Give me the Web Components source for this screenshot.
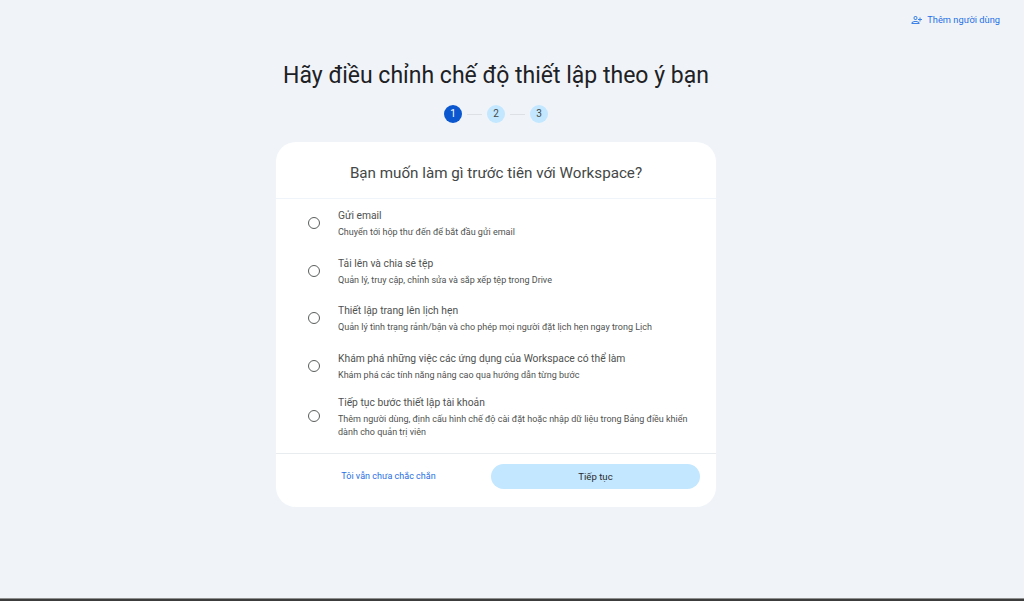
<!DOCTYPE html>
<html lang="vi">
<head>
<meta charset="utf-8">
<title>Workspace</title>
<style>
  html, body { margin: 0; height: 100%; }
  body {
    background: #f0f4f9;
    font-family: Roboto, "Noto Sans", sans-serif;
    color: #1f1f1f;
    overflow: hidden;
  }
</style>
</head>
<body>
<setup-page>
  <add-user-link slot="top">Thêm người dùng</add-user-link>
  <span slot="title">Hãy điều chỉnh chế độ thiết lập theo ý bạn</span>
  <setup-stepper slot="steps" current="1" total="3"></setup-stepper>
  <setup-card slot="card" heading="Bạn muốn làm gì trước tiên với Workspace?">
    <setup-option label="Gửi email" desc="Chuyển tới hộp thư đến để bắt đầu gửi email"></setup-option>
    <setup-option label="Tải lên và chia sẻ tệp" desc="Quản lý, truy cập, chỉnh sửa và sắp xếp tệp trong Drive"></setup-option>
    <setup-option label="Thiết lập trang lên lịch hẹn" desc="Quản lý tình trạng rảnh/bận và cho phép mọi người đặt lịch hẹn ngay trong Lịch"></setup-option>
    <setup-option label="Khám phá những việc các ứng dụng của Workspace có thể làm" desc="Khám phá các tính năng nâng cao qua hướng dẫn từng bước"></setup-option>
    <setup-option label="Tiếp tục bước thiết lập tài khoản" desc="Thêm người dùng, định cấu hình chế độ cài đặt hoặc nhập dữ liệu trong Bảng điều khiển dành cho quản trị viên"></setup-option>
  </setup-card>
</setup-page>
<script>
class SetupPage extends HTMLElement {
  constructor() {
    super()
    this.attachShadow({mode: 'open'})
    this.shadowRoot.innerHTML = `
      <style>
        :host { display: flex; flex-direction: column; height: 601px; box-sizing: border-box; border-bottom: 2px solid #3c3c3c; box-shadow: inset 0 -1px 0 #8f8f8f; padding-right: 32px; }
        .top { display: flex; justify-content: flex-end; padding: 12px 0 0 0; height: 16px; margin-right: -8px; }
        h1 { margin: 30px 0 0; height: 36px; font-size: 23px; line-height: 36px; font-weight: 400; text-align: center; color: #202124; }
        .steps { display: flex; justify-content: center; margin-top: 11px; }
        .card { display: flex; justify-content: center; margin-top: 19px; }
      </style>
      <div class="top"><slot name="top"></slot></div>
      <h1><slot name="title"></slot></h1>
      <div class="steps"><slot name="steps"></slot></div>
      <div class="card"><slot name="card"></slot></div>`
  }
}

class AddUserLink extends HTMLElement {
  constructor() {
    super()
    this.attachShadow({mode: 'open'})
    this.shadowRoot.innerHTML = `
      <style>
        :host { display: flex; align-items: center; gap: 4px; font-size: 9.300px; line-height: 16px; font-weight: 400; color: #1f6fe5; }
        svg { width: 12px; height: 12px; fill: currentColor; opacity: .85; }
      </style>
      <svg viewBox="0 0 24 24"><path d="M9 12c2.200 0 4-1.800 4-4S11.200 4 9 4 5 5.800 5 8s1.800 4 4 4zm0-6c1.100 0 2 .9 2 2s-.9 2-2 2-2-.9-2-2 .9-2 2-2zm10 4V7h-2v3h-3v2h3v3h2v-3h3v-2h-3zM9 14c-2.700 0-8 1.300-8 4v2h16v-2c0-2.700-5.300-4-8-4zm-6 4c.2-.7 3.300-2 6-2s5.800 1.300 6 2H3z"/></svg>
      <slot></slot>`
  }
}

class SetupStepper extends HTMLElement {
  constructor() {
    super()
    this.attachShadow({mode: 'open'})
  }

  connectedCallback() {
    const current = +this.getAttribute('current')
    const total = +this.getAttribute('total')
    let html = ''
    for (let i = 1; i <= total; i++) {
      html += `<span class="dot ${i === current ? 'on' : ''}">${i}</span>`
      if (i < total) html += '<span class="line"></span>'
    }
    this.shadowRoot.innerHTML = `
      <style>
        :host { display: flex; align-items: center; gap: 5px; }
        .dot { width: 18px; height: 18px; border-radius: 50%; background: #c2e7ff; color: #444746; font-size: 10px; line-height: 18px; text-align: center; }
        .dot.on { background: #0b57d0; color: #fff; }
        .line { width: 15px; height: 1px; background: #dde1e6; }
      </style>
      ${html}`
  }
}

class SetupCard extends HTMLElement {
  constructor() {
    super()
    this.attachShadow({mode: 'open'})
    this.shadowRoot.innerHTML = `
      <style>
        :host { display: block; width: 440px; background: #fff; border-radius: 20px; }
        h2 { margin: 0; height: 57px; font-size: 15.200px; line-height: 62px; font-weight: 400; text-align: center; color: #444746; border-bottom: 1px solid #eef4f9; box-sizing: border-box; }
        .list { height: 255px; display: flex; flex-direction: column; box-sizing: border-box; border-bottom: 1px solid #e9ecef; }
        .foot { display: flex; align-items: center; height: 53px; padding: 0 16px 9px 10px; box-sizing: border-box; }
        .later { flex: 1; text-align: center; font-size: 9px; font-weight: 400; color: #1f6fe5; }
        .next { width: 209px; height: 25px; line-height: 25px; border-radius: 13px; background: #c2e7ff; color: #2a2b2d; font-size: 9.600px; font-weight: 400; text-align: center; }
      </style>
      <h2>${this.getAttribute('heading')}</h2>
      <div class="list"><slot></slot></div>
      <div class="foot"><span class="later">Tôi vẫn chưa chắc chắn</span><span class="next">Tiếp tục</span></div>`
  }
}

class SetupOption extends HTMLElement {
  constructor() {
    super()
    this.attachShadow({mode: 'open'})
    this.shadowRoot.innerHTML = `
      <style>
        :host { display: flex; align-items: center; min-height: 47.700px; padding: 0 24px 0 32px; color: #4f5250; }
        :host(:last-child) { margin-top: 2px; }
        :host(:last-child) .text { margin-top: 3px; }
        .radio { flex: none; width: 10px; height: 10px; border: 1.500px solid #5a5d5c; border-radius: 50%; margin-right: 17px; }
        .text { margin: 1px 0 0 1px; }
        .label { font-size: 10.300px; line-height: 16px; }
        .desc { font-size: 9px; line-height: 13px; margin-top: 2px; }
      </style>
      <span class="radio"></span>
      <div class="text"><div class="label">${this.getAttribute('label')}</div><div class="desc">${this.getAttribute('desc')}</div></div>`
  }
}

customElements.define('setup-page', SetupPage)
customElements.define('add-user-link', AddUserLink)
customElements.define('setup-stepper', SetupStepper)
customElements.define('setup-card', SetupCard)
customElements.define('setup-option', SetupOption)
</script>
</body>
</html>
